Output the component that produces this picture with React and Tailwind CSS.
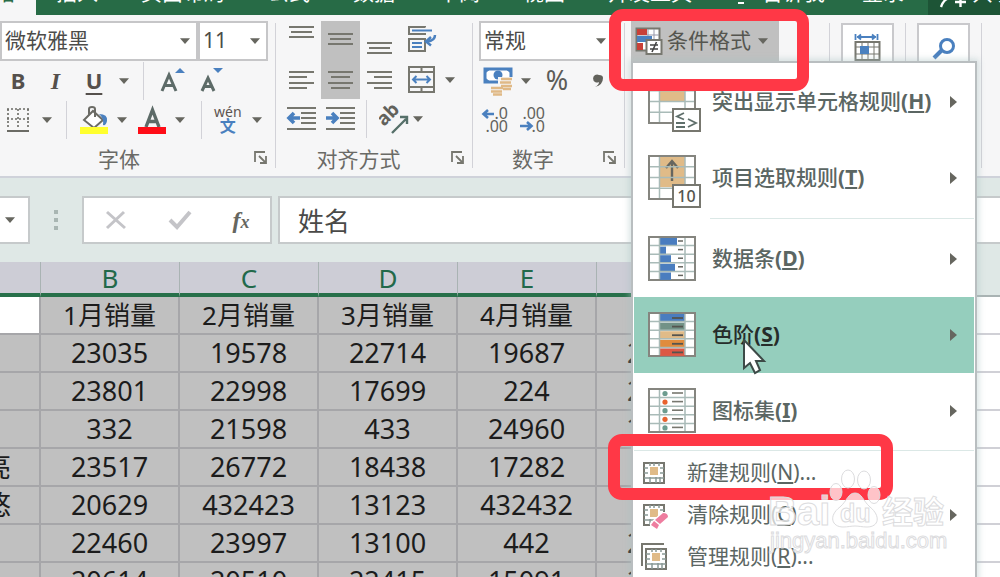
import React from "react";

const Caret = ({ className = "" }) => (
  <svg width="10" height="6" viewBox="0 0 10 6" className={`shrink-0 ${className}`}>
    <path d="M0 0.3h10L5 6z" fill="#66665f" />
  </svg>
);

// --- Ribbon icons ---
const lines = (rows) =>
  rows.map(([x1, x2, y]) => <path key={y} d={`M${x1} ${y}H${x2}`} stroke="#77776f" strokeWidth="2" />);

const LineIcon = ({ rows, children }) => (
  <svg width="39" height="39" viewBox="0 0 39 39" fill="none">
    {lines(rows)}
    {children}
  </svg>
);

const WrapIcon = () => (
  <svg width="39" height="39" viewBox="0 0 39 39" fill="none" strokeWidth="2">
    <path d="M23 6.500V6H7v7h16v-1M7 18h16v12H7z" stroke="#77776f" />
    <path d="M10 9.500h20M10 22h10M10 26h10" stroke="#4a80bf" />
    <path d="M33 14c0 4-2 6-8 6.500M29 16l-5 4.500 5 4" stroke="#4a80bf" strokeWidth="2.500" />
  </svg>
);

const MergeIcon = () => (
  <svg width="39" height="39" viewBox="0 0 39 39" fill="none" strokeWidth="2">
    <path d="M7 7h25v25H7zM7 12h25M7 27h25M19.500 7v5M19.500 27v5" stroke="#77776f" />
    <path d="M11 19.500h17M14.500 16L11 19.500l3.500 3.500M24.500 16l3.500 3.500-3.500 3.500" stroke="#4a80bf" />
  </svg>
);

const BorderIcon = () => (
  <svg width="24" height="26" viewBox="0 0 24 26" fill="none" stroke="#6b6b65" strokeWidth="1.600">
    <path d="M1 2h22M1 12h22M2 2v20M12 2v20M22 2v20" strokeDasharray="2 2" />
    <path d="M1 24h22" strokeWidth="2" />
  </svg>
);

const BucketIcon = () => (
  <svg width="30" height="30" viewBox="0 0 30 30" fill="none">
    <path d="M5 15L14 6l10 9-9 8z" fill="#fff" stroke="#6b6b65" strokeWidth="2" />
    <path d="M10 10V4q0-2 3-2t3 2v8" stroke="#6b6b65" strokeWidth="2" />
    <path d="M20 9q9 0 8 7-1 5-4 4 1-7-4-11z" fill="#4a80bf" />
    <path d="M1 22h28v7H1z" fill="#ffff2e" />
  </svg>
);

const FontColorIcon = () => (
  <svg width="30" height="30" viewBox="0 0 30 30">
    <path d="M9 22L15.500 5 22 22M11 16.500h9" fill="none" stroke="#5d6b68" strokeWidth="3.400" />
    <path d="M1 22h28v7H1z" fill="#ff0d17" />
  </svg>
);

const MoneyIcon = () => (
  <svg width="30" height="30" viewBox="0 0 30 30">
    <path d="M2 3h26v13H2z" fill="#fff" stroke="#4a80bf" strokeWidth="3" />
    <path d="M2 3h5L2 7zM28 3h-5l5 4zM2 16h5l-5-4z" fill="#4a80bf" stroke="#4a80bf" />
    <circle cx="15" cy="9" r="4.500" fill="#4a80bf" />
    <path d="M15 11h15v9H15zM7 20h15v9H7z" fill="#f6f6f6" />
    <path d="M18 13h11M17 16.500h11M18 20h11M20 23h8M8 22h12M8 25.500h11M10 28.500h9" stroke="#e0b986" strokeWidth="2.600" />
  </svg>
);

const OrientationIcon = () => (
  <svg width="32" height="32" viewBox="0 0 32 32">
    <text x="4" y="22" transform="rotate(-45 7 22)" fontFamily="Noto Sans" fontWeight="700" fontSize="19" fill="#62625c">ab</text>
    <path d="M13 30L27 16M21 14h7v7" fill="none" stroke="#56706a" strokeWidth="2.400" />
  </svg>
);

const DecimalIcon = ({ less }) => (
  <svg width="30" height="28" viewBox="0 0 30 28" fontFamily="Noto Sans" fontSize="16" fill="#62625c">
    <text x={less ? 26 : 27} y="13" textAnchor="end">{less ? ".00" : ".0"}</text>
    <text x={less ? 26 : 27} y="26" textAnchor="end">{less ? ".0" : ".00"}</text>
    <path
      d={less ? "M1 20h11M8 16l4.500 4L8 24" : "M3 8h10M7 4L2.500 8 7 12"}
      fill="none"
      stroke="#4a80bf"
      strokeWidth="2.600"
    />
  </svg>
);

const ConditionalIcon = () => (
  <svg width="28" height="29" viewBox="0 0 28 29" fill="none">
    <path d="M1.500 1.500h23v22h-23z" fill="#fff" stroke="#77776f" strokeWidth="2" />
    <path d="M13 2v22M19 2v12M2 8h22" stroke="#99a" />
    <path d="M2 2h10v6H2zM2 16h6v7H2z" fill="#c94038" />
    <path d="M2 9h15v6H2z" fill="#4a80bf" />
    <path d="M11.500 13h15v14h-15z" fill="#fff" stroke="#77776f" strokeWidth="2" />
    <path d="M15 18h8M15 22h8M21.500 15l-4.500 10" stroke="#444" strokeWidth="1.600" />
  </svg>
);

const CellsIcon = () => (
  <svg width="28" height="30" viewBox="0 0 28 30" fill="none">
    <path d="M1.500 1v6M23.500 1v6M3 4h19M7 1.500L4 4l3 2.500M18 1.500L21 4l-3 2.500" stroke="#4a80bf" strokeWidth="1.800" />
    <path d="M1.500 9h24v18h-24z" fill="#fff" stroke="#77776f" strokeWidth="2" />
    <path d="M8 9v18M14 9v18M20 9v18M2 14h23M2 21h23" stroke="#77776f" />
    <path d="M6 13h9v8H6z" fill="#4a80bf" />
  </svg>
);

const SearchIcon = () => (
  <svg width="24" height="24" viewBox="0 0 24 24" fill="none" stroke="#4a80bf">
    <circle cx="15" cy="9" r="6.500" strokeWidth="3" />
    <path d="M10 13L2 21" strokeWidth="4" />
  </svg>
);

const Launcher = () => (
  <button aria-label="更多设置">
    <svg width="13" height="13" viewBox="0 0 13 13" fill="none" stroke="#77776f" strokeWidth="1.800">
      <path d="M1 11V1h10M5 5l6 6M12 5v7H6" />
    </svg>
  </button>
);

// --- Menu icons ---
const GridBase = ({ rows = 5, children }) => (
  <svg width="48" height="46" viewBox="0 0 48 46" fill="none" className="shrink-0 overflow-visible">
    <path d="M1 1h46v43H1z" fill="#fff" stroke="#85857f" strokeWidth="2" />
    {children}
    {Array.from({ length: rows - 1 }, (_, i) => (
      <path key={i} d={`M2 ${((i + 1) * 43) / rows + 1}h44`} stroke="#a9bbb8" strokeWidth="1.500" />
    ))}
    <path d="M11.500 2v41M37 2v41" stroke="#a9bbb8" strokeWidth="1.500" />
  </svg>
);

const HighlightIcon = () => (
  <div className="relative shrink-0">
    <GridBase rows={4}><path d="M12 12h25v10H12z" fill="#e0bb88" /></GridBase>
    <svg width="29" height="24" viewBox="0 0 29 24" fill="none" className="absolute top-[29px] left-[24px]">
      <path d="M1 1h27v22H1z" fill="#fff" stroke="#77776f" strokeWidth="2" />
      <path d="M12 5L5 8.500l7 3M4 15h9M4 19h9M16 11l8 4-8 4" stroke="#5f6f6b" strokeWidth="1.800" />
    </svg>
  </div>
);

const TopIcon = () => (
  <div className="relative shrink-0">
    <GridBase rows={4}>
      <path d="M12 2h25v30H12z" fill="#e0bb88" />
      <path d="M24 26V7M18 13l6-7 6 7" stroke="#66665f" strokeWidth="2.400" />
    </GridBase>
    <span className="absolute top-[29px] left-[24px] h-[24px] w-[29px] border-2 border-[#77776f] bg-white text-center text-base leading-5 text-[#55554f]">10</span>
  </div>
);

const BarsIcon = () => (
  <GridBase>
    {[17, 6, 11, 15, 11].map((w, i) => (
      <g key={i}>
        <path d={`M12 ${i * 8.6 + 2}h${w}v7.500h-${w}z`} fill="#4a7dbf" />
        <path d={`M30 ${i * 8.6 + 5}h5`} stroke="#66665f" strokeWidth="1.500" />
      </g>
    ))}
  </GridBase>
);

const ScalesIcon = () => (
  <GridBase>
    {["#4a7dbf", "#729287", "#e0bb88", "#e08c3d", "#dd5845"].map((c, i) => (
      <g key={c}>
        <path d={`M12 ${i * 8.6 + 2}h25v7.500h-25z`} fill={c} />
        <path d={`M24 ${i * 8.6 + 6}h11`} stroke="#54544f" strokeWidth="1.800" />
      </g>
    ))}
  </GridBase>
);

const IconSetIcon = () => (
  <GridBase>
    {["#6d9c8f", "#e8622e", "#6d9c8f", "#e8622e", "#6d9c8f"].map((c, i) => (
      <g key={i}>
        <circle cx="17" cy={i * 8.6 + 5.5} r="2.600" fill={c} />
        <path d={`M24 ${i * 8.6 + 5}h11`} stroke="#77776f" strokeWidth="1.600" />
      </g>
    ))}
  </GridBase>
);

const RuleIcon = ({ kind }) => (
  <svg width="24" height="24" viewBox="0 0 24 24" fill="none" className="shrink-0 overflow-visible">
    {kind === "manage" && <path d="M0 21V-1h22" stroke="#77776f" strokeWidth="2" />}
    <g transform={kind === "manage" ? "translate(2 2)" : undefined}>
      <path d="M2 2h20v20H2z" fill="#fff" stroke="#77776f" strokeWidth="2" />
      <path d="M2 7h4M2 12h4M2 17h20M18 7h4M18 12h4M8 2v3M12 2v3M17 2v3M8 16v6M14 16v6M18 16v6" stroke="#8b9a96" strokeWidth="1.500" />
      <path d="M8 6h8v8H8z" fill="#e0bb88" />
    </g>
    {kind === "clear" && (
      <>
        <path d="M8 20L20 9h8v16H8z" fill="#fff" />
        <path d="M13 17l8-7q5 0 5 4l-8 7z" fill="#ee7d9f" />
        <path d="M12 18l5 4-2 4-6-4z" fill="#ee7d9f" />
      </>
    )}
  </svg>
);

// --- Data ---
const tabs = ["插入", "页面布局", "公式", "数据", "审阅", "视图", "开发工具"];

const columns = ["B", "C", "D", "E", "F"];

const rows = [
  ["", "1月销量", "2月销量", "3月销量", "4月销量", ""],
  ["", "23035", "19578", "22714", "19687", "21540"],
  ["", "23801", "22998", "17699", "224", "22316"],
  ["", "332", "21598", "433", "24960", "20875"],
  ["亮", "23517", "26772", "18438", "17282", "443"],
  ["悠", "20629", "432423", "13123", "432432", "332"],
  ["", "22460", "23997", "13100", "442", "21100"],
  ["", "20614", "20510", "22415", "15091", "22415"],
];

const bigItems = [
  { label: "突出显示单元格规则", k: "H", icon: <HighlightIcon /> },
  { label: "项目选取规则", k: "T", icon: <TopIcon /> },
  { label: "数据条", k: "D", icon: <BarsIcon />, line: true },
  { label: "色阶", k: "S", icon: <ScalesIcon />, active: true },
  { label: "图标集", k: "I", icon: <IconSetIcon /> },
];

const smallItems = [
  { label: "新建规则", k: "N", kind: "new", dots: true },
  { label: "清除规则", k: "C", kind: "clear", sub: true },
  { label: "管理规则", k: "R", kind: "manage", dots: true },
];

const Submenu = () => (
  <svg width="8" height="12" viewBox="0 0 8 12" className="ml-auto shrink-0">
    <path d="M0 0l7 6-7 6z" fill="#66665f" />
  </svg>
);

const Select = ({ label, value, className }) => (
  <div className={`relative ${className}`}>
    <select aria-label={label} defaultValue={value} className="h-10 w-full appearance-none border-2 border-[#c6c6c8] bg-white pl-[3px] text-[21px] text-[#4c4c4a]">
      <option>{value}</option>
    </select>
    <Caret className="pointer-events-none absolute top-[17px] right-2" />
  </div>
);

const Divider = () => <span className="h-[38px] w-px bg-[#d2d2d8]" />;

const Group = ({ label, children, className }) => (
  <section className={`flex shrink-0 flex-col pt-[6px] pb-[5px] ${className}`}>
    {children}
    <div className="mt-auto flex items-center pr-2">
      <h2 className="flex-1 pt-1 pr-4 text-center text-[21px] leading-6 text-[#6a6a66]">{label}</h2>
      <Launcher />
    </div>
  </section>
);

function ConditionalMenu() {
  return (
    <div role="menu" className="absolute top-10 left-0 z-10 w-[346px] border-2 border-[#b9bec0] bg-white px-px pt-px pb-3 text-[21px] text-[#5b6663] shadow-[0_0_6px_2px_rgba(170,195,195,0.45)]">
      {bigItems.map((item) => (
        <React.Fragment key={item.k}>
          {item.line && <hr className="my-[2px] ml-[76px] border-[#dbe8e6]" />}
          <button
            role="menuitem"
            className={`flex h-[76px] w-full items-center gap-4 pr-4 pl-[14px] font-medium ${item.active ? "bg-[#95cebd] text-[#262c2a]" : ""}`}
          >
            {item.icon}
            <span className="whitespace-nowrap">{item.label}<span className="font-bold">(<u className="underline-offset-2">{item.k}</u>)</span></span>
            <Submenu />
          </button>
        </React.Fragment>
      ))}
      <hr className="my-px border-[#dbe8e6]" />
      {smallItems.map((item) => (
        <button role="menuitem" key={item.k} className="flex h-[42px] w-full items-center gap-[21px] pr-4 pl-2">
          <RuleIcon kind={item.kind} />
          <span className="whitespace-nowrap">{item.label}(<u className="underline-offset-2">{item.k}</u>){item.dots && "..."}</span>
          {item.sub && <Submenu />}
        </button>
      ))}
    </div>
  );
}

function Ribbon() {
  return (
    <div className="relative z-10 flex h-[163px] border-b-2 border-[#cfd2da] bg-[#f6f6f7]">
      <Group label="字体" className="w-[275px]">
        <div className="flex">
          <Select label="字体名称" value="微软雅黑" className="w-[198px]" />
          <Select label="字号" value="11" className="w-[70px]" />
        </div>
        <div className="flex h-[39px] items-center text-[22px] text-[#55504c]">
          <button className="w-9 font-bold">B</button>
          <button className="w-[39px] font-['Liberation_Serif'] text-2xl font-bold italic">I</button>
          <button className="w-[38px] font-bold underline underline-offset-4">U</button>
          <button aria-label="下划线样式" className="px-[6px]"><Caret /></button>
          <span className="w-2" />
          <Divider />
          <button aria-label="增大字号" className="ml-2 flex w-10 items-center justify-center">
            <svg width="28" height="28" viewBox="0 0 28 28">
              <path d="M4 24L11 8l7 16M7 18.500h8" fill="none" stroke="#5d6b68" strokeWidth="3" />
              <path d="M17 6l5-5 5 5z" fill="#4a80bf" />
            </svg>
          </button>
          <button aria-label="减小字号" className="flex w-10 items-center justify-center">
            <svg width="28" height="28" viewBox="0 0 28 28">
              <path d="M4 24l6-13 6 13M6 19.500h8" fill="none" stroke="#5d6b68" strokeWidth="3" />
              <path d="M15 1h10l-5 5z" fill="#4a80bf" />
            </svg>
          </button>
        </div>
        <div className="flex h-[39px] items-center">
          <button aria-label="边框" className="flex items-center gap-3 px-[6px]"><BorderIcon /><Caret /></button>
          <span className="w-2" />
          <Divider />
          <button aria-label="填充颜色" className="flex items-center gap-2 pr-[6px] pl-3"><BucketIcon /><Caret /></button>
          <button aria-label="字体颜色" className="flex items-center gap-2 px-1"><FontColorIcon /><Caret /></button>
          <span className="w-3" />
          <Divider />
          <button className="flex items-center gap-[10px] pl-3 text-left">
            <span className="flex flex-col items-center">
              <span className="text-sm leading-3 text-[#5c5450]">wén</span>
              <span className="text-base leading-4 font-bold text-[#4a80bf]">文</span>
            </span>
            <Caret />
          </button>
        </div>
      </Group>
      <span className="my-2 w-px bg-[#d2d2d8]" />

      <Group label="对齐方式" className="w-[196px] pl-[6px]">
        <div className="flex">
          <button aria-label="顶端对齐"><LineIcon rows={[[7, 32, 6], [9, 30, 11], [7, 32, 16]]} /></button>
          <button aria-label="垂直居中" className="bg-[#c0c0c0]"><LineIcon rows={[[7, 32, 13], [9, 30, 18], [7, 32, 23]]} /></button>
          <button aria-label="底端对齐"><LineIcon rows={[[7, 32, 22], [9, 30, 27], [7, 32, 32]]} /></button>
          <button aria-label="自动换行" className="ml-[3px]"><WrapIcon /></button>
        </div>
        <div className="flex items-center">
          <button aria-label="左对齐"><LineIcon rows={[[7, 32, 12], [7, 25, 17], [7, 32, 23], [7, 25, 28]]} /></button>
          <button aria-label="居中" className="bg-[#c0c0c0]"><LineIcon rows={[[7, 32, 12], [10, 29, 17], [7, 32, 23], [10, 29, 28]]} /></button>
          <button aria-label="右对齐"><LineIcon rows={[[7, 32, 12], [14, 32, 17], [7, 32, 23], [14, 32, 28]]} /></button>
          <button aria-label="合并后居中" className="ml-[3px] flex items-center gap-1"><MergeIcon /><Caret /></button>
        </div>
        <div className="flex items-center">
          <button aria-label="减少缩进量">
            <LineIcon rows={[[5, 34, 9], [19, 34, 14], [19, 34, 19], [19, 34, 24], [5, 34, 30]]}>
              <path d="M18 19H8M12 14l-5 5 5 5" stroke="#4a80bf" strokeWidth="3.600" />
            </LineIcon>
          </button>
          <button aria-label="增加缩进量">
            <LineIcon rows={[[5, 34, 9], [19, 34, 14], [19, 34, 19], [19, 34, 24], [5, 34, 30]]}>
              <path d="M5 19h10M11 14l5 5-5 5" stroke="#4a80bf" strokeWidth="3.600" />
            </LineIcon>
          </button>
          <span className="w-[6px]" />
          <Divider />
          <button aria-label="方向" className="ml-3 flex items-center gap-[2px]"><OrientationIcon /><Caret /></button>
        </div>
      </Group>
      <span className="my-2 w-px bg-[#d2d2d8]" />

      <Group label="数字" className="w-[151px] pl-[6px]">
        <Select label="数字格式" value="常规" className="w-[135px]" />
        <div className="flex h-[39px] items-center text-[27px] text-[#5c5c57]">
          <button aria-label="会计数字格式" className="flex items-center gap-2 pl-1"><MoneyIcon /><Caret /></button>
          <button className="ml-2 w-9">%</button>
          <button aria-label="千位分隔样式" className="ml-3 flex w-6 justify-center">
            <svg width="12" height="14" viewBox="0 0 12 14">
              <path d="M6 1a4 4 0 1 0 0 7q0 3-4 5 8-2 8-9 0-3-4-3z" fill="#62625c" />
            </svg>
          </button>
        </div>
        <div className="flex h-[39px] items-center gap-2 pl-[2px]">
          <button aria-label="增加小数位数"><DecimalIcon /></button>
          <button aria-label="减少小数位数"><DecimalIcon less /></button>
        </div>
      </Group>
      <span className="my-2 w-px bg-[#d2d2d8]" />

      <section className="relative ml-[6px] w-[198px] shrink-0 pt-[6px]">
        <div className="relative">
          <button className="flex h-10 items-center gap-1 bg-[#c0c0c0] pr-[11px] pl-1 text-[21px] text-[#55554f]">
            <ConditionalIcon />
            <span className="whitespace-nowrap">条件格式</span>
            <Caret className="ml-[3px]" />
          </button>
          <ConditionalMenu />
        </div>
      </section>
      <span className="my-2 w-px bg-[#d2d2d8]" />
      <section className="w-[75px] shrink-0 px-[11px] pt-2">
        <button aria-label="单元格" className="flex h-20 w-full justify-center border-2 border-[#c9c9cc] bg-white pt-2"><CellsIcon /></button>
      </section>
      <span className="my-2 w-px bg-[#d2d2d8]" />
      <section className="w-[75px] shrink-0 px-[11px] pt-2">
        <button aria-label="查找和选择" className="flex h-20 w-full justify-center border-2 border-[#c9c9cc] bg-white pt-3"><SearchIcon /></button>
      </section>
      <span className="my-2 w-px bg-[#d2d2d8]" />
    </div>
  );
}

function FormulaBar() {
  return (
    <div className="flex items-center bg-[#dfe8e6] py-[18px]">
      <button aria-label="名称框" className="flex h-12 w-[30px] items-center justify-center border-2 border-l-0 border-[#c6cacb] bg-white pr-2"><Caret /></button>
      <span className="flex w-[52px] flex-col items-center gap-1">
        <i className="size-1 bg-[#a9b6b3]" />
        <i className="size-1 bg-[#a9b6b3]" />
        <i className="size-1 bg-[#a9b6b3]" />
      </span>
      <div className="flex h-12 w-[190px] shrink-0 items-center justify-around border-2 border-[#c6cacb] bg-white">
        <button aria-label="取消">
          <svg width="22" height="20" viewBox="0 0 22 20" fill="none" stroke="#c4c4c8" strokeWidth="3"><path d="M2 2l18 16M19 2L2 18" /></svg>
        </button>
        <button aria-label="输入">
          <svg width="24" height="20" viewBox="0 0 24 20" fill="none" stroke="#c4c4c8" strokeWidth="4"><path d="M2 10l7 7L22 2" /></svg>
        </button>
        <button className="font-['Liberation_Serif'] text-2xl font-bold text-[#66665f] italic">f<span className="text-lg">x</span></button>
      </div>
      <input aria-label="编辑栏" defaultValue="姓名" className="ml-[6px] h-12 min-w-0 flex-1 border-y-2 border-l-2 border-[#c6cacb] bg-white px-[18px] text-[26px] text-[#4a4a48]" />
    </div>
  );
}

function Sheet() {
  return (
    <table className="w-full table-fixed border-separate border-spacing-0 text-center text-[#1c1c1c]">
      <colgroup>
        <col className="w-[41px]" />
        {columns.map((c) => <col key={c} className="w-[139px]" />)}
        <col />
      </colgroup>
      <thead>
        <tr className="h-[35px] text-[26px] leading-7 text-[#22694a]">
          <th className="border-r border-b-4 border-r-[#a9b3b3] border-b-[#27704a] bg-[#cdcdd6]" />
          {columns.map((c) => (
            <th key={c} className="border-r border-b-4 border-r-[#a9b3b3] border-b-[#27704a] bg-[#cdcdd6] p-0 font-normal">{c}</th>
          ))}
          <th className="border-b-2 border-[#a9b3b3] bg-[#dfe8e6]" />
        </tr>
      </thead>
      <tbody>
        {rows.map((row, r) => (
          <tr key={r} className="h-[38px]">
            {row.map((cell, c) => (
              <td
                key={c}
                className={`overflow-hidden border-r-2 border-b-2 border-[#a6a6a9] p-0 leading-8 whitespace-nowrap ${r === 0 ? "text-[26px]" : "text-[27px]"} ${r === 0 && c === 0 ? "bg-white" : "bg-[#c0c0c0]"}`}
              >
                {c === 0 ? <span className="flex justify-end pr-7">{cell}</span> : cell}
              </td>
            ))}
            <td className="border-b-2 border-[#d0d0d6] bg-white" />
          </tr>
        ))}
      </tbody>
    </table>
  );
}

const Watermark = () => (
  <svg
    width="184"
    height="92"
    viewBox="0 0 184 92"
    className="pointer-events-none absolute top-[466px] left-[766px] z-20"
    fill="#ffffff"
    fillOpacity="0.7"
    stroke="#dcdcde"
    strokeWidth="1"
    fontFamily="Liberation Sans, Noto Sans CJK SC, sans-serif"
  >
    <text x="2" y="59" fontSize="40" fontWeight="700">Bai</text>
    <ellipse cx="70" cy="26" rx="6" ry="8.500" />
    <ellipse cx="82" cy="13" rx="6.500" ry="9" />
    <ellipse cx="98" cy="14" rx="6.500" ry="9" />
    <ellipse cx="108" cy="29" rx="6" ry="8.500" />
    <path d="M89 27c-7 0-8 8-15 14-12 9-8 20 3 20 5 0 8-1 12-1s7 1 12 1c12 0 14-11 3-20-7-6-8-14-15-14z" />
    <text x="74" y="56" fontSize="25" fontWeight="700">du</text>
    <text x="116" y="57" fontSize="31" fontWeight="700">经验</text>
    <text x="4" y="82" fontSize="22">jingyan.baidu.com</text>
  </svg>
);

export default function App() {
  return (
    <div className="relative h-screen overflow-hidden bg-white font-['Noto_Sans','Noto_Sans_CJK_SC',sans-serif]">
      <header className="flex h-[15px] items-end overflow-hidden bg-[#276b46] text-[21px] leading-6 whitespace-nowrap text-white">
        <a href="#home" className="flex h-10 w-9 shrink-0 items-end justify-end bg-[#f6f6f7] pr-[21px] pb-[11px] text-[#276b46]">开始</a>
        <nav className="flex shrink-0 gap-[43px] pb-[11px] pl-5">
          {tabs.map((t) => <a key={t} href="#tab">{t}</a>)}
        </nav>
        <svg width="10" height="20" viewBox="0 0 10 20" className="mb-[11px] ml-11 shrink-0" fill="none" stroke="#fff" strokeWidth="2">
          <path d="M1 15h8M2 19h6" />
        </svg>
        <a href="#tell" className="ml-4 shrink-0 pb-[11px]">告诉我...</a>
        <a href="#login" className="ml-5 shrink-0 pb-[11px]">登录</a>
        <button className="ml-auto flex h-10 w-[72px] shrink-0 items-end bg-[#1d5436] pb-[11px] pl-3">
          <svg width="28" height="20" viewBox="0 0 28 20" fill="none" stroke="#fff" strokeWidth="2.400" className="shrink-0 overflow-visible">
            <path d="M1 23q2-6 6-8M15 18h11M20.500 12v11" />
          </svg>
          <span className="ml-1">共享</span>
        </button>
      </header>
      <Ribbon />
      <FormulaBar />
      <Sheet />

      {/* mouse pointer */}
      <svg width="28" height="40" viewBox="0 0 28 40" className="pointer-events-none absolute top-[338px] left-[742px] z-20">
        <path d="M2 2v28l6-5 5 10 5-3-4-9h8z" fill="#fff" stroke="#3d4a47" strokeWidth="2" />
      </svg>

      {/* callouts */}
      <div className="pointer-events-none absolute top-[9px] left-[609px] z-20 h-[82px] w-[200px] rounded-[14px] border-[12px] border-[#ff3846]" />
      <div className="pointer-events-none absolute top-[434px] left-[608px] z-20 h-[66px] w-[285px] rounded-[14px] border-[12px] border-[#ff3846]" />
      <Watermark />
    </div>
  );
}
